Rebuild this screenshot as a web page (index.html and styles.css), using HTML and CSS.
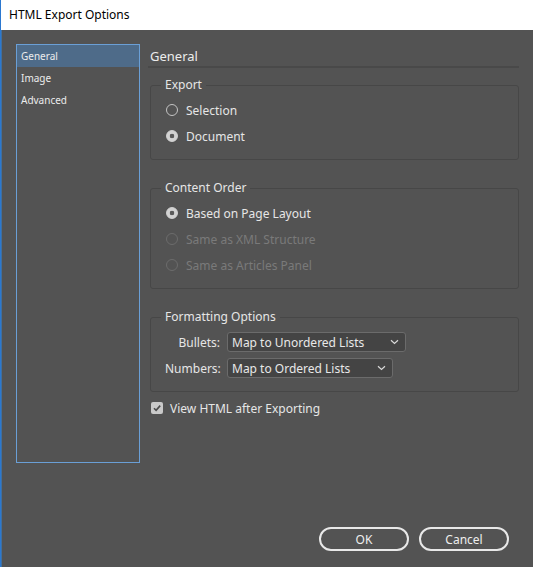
FILE: index.html
```html
<!DOCTYPE html>
<html>
<head>
<meta charset="utf-8">
<title>HTML Export Options</title>
<link rel="stylesheet" href="styles.css">
</head>
<body>
<div class="frame">
  <div class="titlebar">HTML Export Options</div>
  <div class="window">
    <div class="content">
      <ul class="sidebar">
        <li class="item selected">General</li>
        <li class="item">Image</li>
        <li class="item">Advanced</li>
      </ul>
      <div class="main">
        <div class="heading">General</div>
        <div class="divider"></div>

        <fieldset class="group group-export">
          <legend>Export</legend>
          <div class="option"><span class="radio"></span><span>Selection</span></div>
          <div class="option"><span class="radio checked"></span><span>Document</span></div>
        </fieldset>

        <fieldset class="group group-order">
          <legend>Content Order</legend>
          <div class="option"><span class="radio checked"></span><span>Based on Page Layout</span></div>
          <div class="option disabled"><span class="radio"></span><span>Same as XML Structure</span></div>
          <div class="option disabled"><span class="radio"></span><span>Same as Articles Panel</span></div>
        </fieldset>

        <fieldset class="group group-format">
          <legend>Formatting Options</legend>
          <div class="field">
            <span class="label">Bullets:</span>
            <div class="select select-bullets">
              <span>Map to Unordered Lists</span>
              <svg class="chev" width="9" height="6" viewBox="0 0 9 6"><path d="M1 1.2 L4.5 4.5 L8 1.2" fill="none" stroke="#d8d8d8" stroke-width="1.2"/></svg>
            </div>
          </div>
          <div class="field">
            <span class="label">Numbers:</span>
            <div class="select select-numbers">
              <span>Map to Ordered Lists</span>
              <svg class="chev" width="9" height="6" viewBox="0 0 9 6"><path d="M1 1.2 L4.5 4.5 L8 1.2" fill="none" stroke="#d8d8d8" stroke-width="1.2"/></svg>
            </div>
          </div>
        </fieldset>

        <div class="check-row">
          <span class="checkbox"><svg width="12" height="12" viewBox="0 0 12 12"><path d="M3 6.2 L5.1 8.3 L9.2 3.6" fill="none" stroke="#4a4a4a" stroke-width="1.6"/></svg></span>
          <span>View HTML after Exporting</span>
        </div>
      </div>
    </div>
    <div class="footer">
      <button class="btn">OK</button>
      <button class="btn">Cancel</button>
    </div>
  </div>
</div>
</body>
</html>
```
FILE: styles.css
```css
html, body {
  margin: 0;
  padding: 0;
}
body {
  width: 533px;
  height: 567px;
  overflow: hidden;
  font-family: "Noto Sans", "Open Sans", sans-serif;
  font-size: 12px;
  color: #e4e4e4;
}
.frame {
  height: 567px;
  border-left: 1px solid #2b78d0;
  display: flex;
  flex-direction: column;
  box-sizing: border-box;
}
.titlebar {
  height: 30px;
  background: #ffffff;
  color: #000000;
  font-size: 12px;
  line-height: 30px;
  padding-left: 8px;
  flex: none;
}
.window {
  flex: 1;
  background: #535353;
  display: flex;
  flex-direction: column;
  border-left: 1px solid #3f6f9f;
}
.content {
  display: flex;
  padding: 14px 14px 0 14px;
}
.sidebar {
  list-style: none;
  margin: 0;
  padding: 0;
  width: 122px;
  height: 417px;
  border: 1px solid #6a9fd6;
  font-size: 10px;
  color: #ececec;
  flex: none;
}
.item {
  height: 22px;
  line-height: 22px;
  padding-left: 4px;
}
.item.selected {
  background: #4e6b89;
}
.main {
  margin-left: 10px;
  width: 369px;
}
.heading {
  font-size: 13px;
  line-height: 20px;
  padding-top: 2px;
  color: #ececec;
}
.divider {
  height: 2px;
  background: #494949;
  margin-left: -2px;
  margin-bottom: 9px;
}
.group {
  margin: 0;
  border: 1px solid #474747;
  border-radius: 3px;
  padding: 0 0 10px 0;
  min-width: 0;
}
.group legend {
  padding: 0 4px;
  margin-left: 10px;
  line-height: 16px;
  font-size: 12px;
  color: #e6e6e6;
}
.group-export {
  padding-top: 4px;
}
.group-order {
  margin-top: 20px;
  padding-top: 4px;
}
.group-format {
  margin-top: 20px;
  padding-top: 4px;
}
.option {
  height: 26px;
  display: flex;
  align-items: center;
  gap: 8px;
  padding-left: 15px;
  color: #e6e6e6;
}
.option.disabled {
  color: #7a7a7a;
}
.radio {
  width: 10px;
  height: 10px;
  border: 1px solid #c4c4c4;
  border-radius: 50%;
  box-sizing: content-box;
  flex: none;
}
.option.disabled .radio {
  border-color: #6c6c6c;
}
.radio.checked {
  border-color: #d2d2d2;
  background: radial-gradient(circle, #5a5a5a 0 2px, #d2d2d2 2.6px);
}
.field {
  height: 26px;
  display: grid;
  grid-template-columns: 55px auto;
  column-gap: 7px;
  align-items: center;
  padding-left: 14px;
}
.label {
  text-align: right;
  color: #e6e6e6;
}
.select {
  height: 18px;
  border: 1px solid #6b6b6b;
  border-radius: 3px;
  background: #444444;
  display: flex;
  align-items: center;
  justify-content: space-between;
  padding: 0 6px 0 4px;
  box-sizing: content-box;
  color: #e8e8e8;
}
.select-bullets {
  width: 167px;
}
.select-numbers {
  width: 154px;
}
.check-row {
  height: 24px;
  margin-top: 4px;
  display: flex;
  align-items: center;
  gap: 7px;
  padding-left: 1px;
  color: #e6e6e6;
}
.checkbox {
  width: 12px;
  height: 12px;
  background: #c9c9c9;
  border-radius: 2px;
  display: flex;
  flex: none;
}
.footer {
  margin-top: auto;
  display: flex;
  justify-content: flex-end;
  gap: 10px;
  padding: 0 24px 16px 0;
}
.btn {
  width: 90px;
  height: 24px;
  border: 2px solid #e8e8e8;
  border-radius: 12px;
  background: transparent;
  color: #eeeeee;
  font-family: "Noto Sans", "Open Sans", sans-serif;
  font-size: 12px;
  padding: 0;
}
```
